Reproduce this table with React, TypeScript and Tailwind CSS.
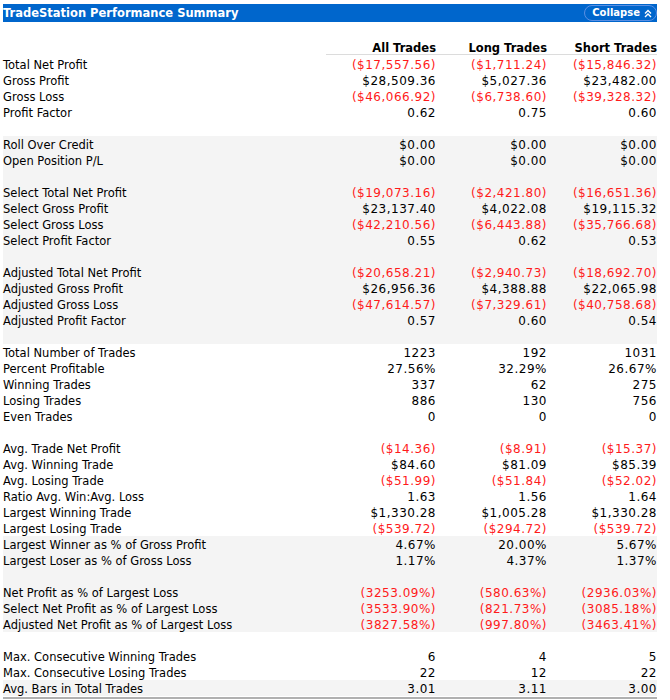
import React from "react";

type Row = { l?: string; v?: [string, string, string]; g?: boolean };

const rows: Row[] = [
  { l: "Total Net Profit", v: ["($17,557.56)", "($1,711.24)", "($15,846.32)"] },
  { l: "Gross Profit", v: ["$28,509.36", "$5,027.36", "$23,482.00"] },
  { l: "Gross Loss", v: ["($46,066.92)", "($6,738.60)", "($39,328.32)"] },
  { l: "Profit Factor", v: ["0.62", "0.75", "0.60"] },
  {},
  { l: "Roll Over Credit", v: ["$0.00", "$0.00", "$0.00"], g: true },
  { l: "Open Position P/L", v: ["$0.00", "$0.00", "$0.00"], g: true },
  { g: true },
  { l: "Select Total Net Profit", v: ["($19,073.16)", "($2,421.80)", "($16,651.36)"], g: true },
  { l: "Select Gross Profit", v: ["$23,137.40", "$4,022.08", "$19,115.32"], g: true },
  { l: "Select Gross Loss", v: ["($42,210.56)", "($6,443.88)", "($35,766.68)"], g: true },
  { l: "Select Profit Factor", v: ["0.55", "0.62", "0.53"], g: true },
  { g: true },
  { l: "Adjusted Total Net Profit", v: ["($20,658.21)", "($2,940.73)", "($18,692.70)"], g: true },
  { l: "Adjusted Gross Profit", v: ["$26,956.36", "$4,388.88", "$22,065.98"], g: true },
  { l: "Adjusted Gross Loss", v: ["($47,614.57)", "($7,329.61)", "($40,758.68)"], g: true },
  { l: "Adjusted Profit Factor", v: ["0.57", "0.60", "0.54"], g: true },
  { g: true },
  { l: "Total Number of Trades", v: ["1223", "192", "1031"] },
  { l: "Percent Profitable", v: ["27.56%", "32.29%", "26.67%"] },
  { l: "Winning Trades", v: ["337", "62", "275"] },
  { l: "Losing Trades", v: ["886", "130", "756"] },
  { l: "Even Trades", v: ["0", "0", "0"] },
  {},
  { l: "Avg. Trade Net Profit", v: ["($14.36)", "($8.91)", "($15.37)"] },
  { l: "Avg. Winning Trade", v: ["$84.60", "$81.09", "$85.39"] },
  { l: "Avg. Losing Trade", v: ["($51.99)", "($51.84)", "($52.02)"] },
  { l: "Ratio Avg. Win:Avg. Loss", v: ["1.63", "1.56", "1.64"] },
  { l: "Largest Winning Trade", v: ["$1,330.28", "$1,005.28", "$1,330.28"] },
  { l: "Largest Losing Trade", v: ["($539.72)", "($294.72)", "($539.72)"] },
  { l: "Largest Winner as % of Gross Profit", v: ["4.67%", "20.00%", "5.67%"], g: true },
  { l: "Largest Loser as % of Gross Loss", v: ["1.17%", "4.37%", "1.37%"], g: true },
  { g: true },
  { l: "Net Profit as % of Largest Loss", v: ["(3253.09%)", "(580.63%)", "(2936.03%)"], g: true },
  { l: "Select Net Profit as % of Largest Loss", v: ["(3533.90%)", "(821.73%)", "(3085.18%)"], g: true },
  { l: "Adjusted Net Profit as % of Largest Loss", v: ["(3827.58%)", "(997.80%)", "(3463.41%)"], g: true },
  {},
  { l: "Max. Consecutive Winning Trades", v: ["6", "4", "5"] },
  { l: "Max. Consecutive Losing Trades", v: ["22", "12", "22"] },
  { l: "Avg. Bars in Total Trades", v: ["3.01", "3.11", "3.00"], g: true },
];

function Val({ s, w }: { s: string; w: string }) {
  const red = s.startsWith("(");
  return (
    <div
      className={
        w +
        " text-right whitespace-nowrap text-[12px] tracking-[0.5px] " +
        (red ? "text-[#ff1a1a]" : "text-black")
      }
    >
      {s}
    </div>
  );
}

export default function App() {
  return (
    <div
      className="w-[670px] h-[700px] overflow-hidden bg-white pt-[4px] pl-[3px] text-[11.5px] leading-[16px] text-black"
      style={{ fontFamily: '"DejaVu Sans", Verdana, sans-serif' }}
    >
      <div className="w-[654px]">
        <div className="h-[18px] bg-[#0066cc] flex items-center justify-between">
          <div className="font-bold text-white text-[11.5px]">TradeStation Performance Summary</div>
          <div className="h-[16px] pl-[7px] pr-[4px] rounded-full border border-[#5b8fe2] flex items-center gap-[4px] text-white font-bold text-[10px] leading-[14px]">
            <span>Collapse</span>
            <svg width="8" height="9" viewBox="0 0 8 9" fill="none" stroke="white" strokeWidth="1.4">
              <path d="M1 4.5 L4 1.5 L7 4.5" />
              <path d="M1 8 L4 5 L7 8" />
            </svg>
          </div>
        </div>
        <div className="mt-[16px] flex h-[17px]">
          <div className="w-[323px]" />
          <div className="flex border-b border-[#dcdcdc] font-bold text-[11.5px] pt-[2px]">
            <div className="w-[110px] text-right whitespace-nowrap">All Trades</div>
            <div className="w-[111px] text-right whitespace-nowrap">Long Trades</div>
            <div className="w-[110px] text-right whitespace-nowrap">Short Trades</div>
          </div>
        </div>
        <div className="mt-[1px]">
          {rows.map((r, i) => (
            <div
              key={i}
              className={"flex h-[16px] leading-[18px] " + (r.g ? "bg-[#f4f4f4]" : "bg-white")}
            >
              <div className="w-[323px] whitespace-nowrap">{r.l ?? ""}</div>
              {r.v ? (
                <>
                  <Val s={r.v[0]} w="w-[110px]" />
                  <Val s={r.v[1]} w="w-[111px]" />
                  <Val s={r.v[2]} w="w-[110px]" />
                </>
              ) : null}
            </div>
          ))}
        </div>
        <div className="mt-[1px] h-[2px] bg-[#b0b0b0]" />
      </div>
    </div>
  );
}
